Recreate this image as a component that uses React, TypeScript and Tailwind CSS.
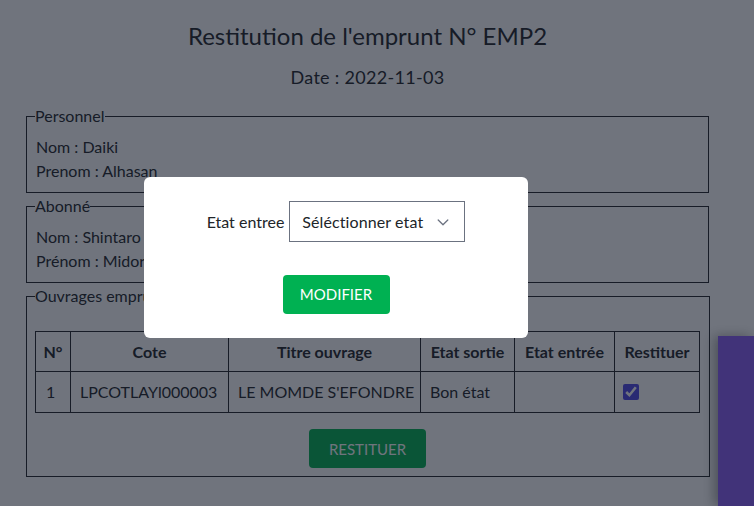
import React from "react";

const rows = [
  { n: "1", cote: "LPCOTLAYl000003", titre: "LE MOMDE S'EFONDRE", sortie: "Bon état", entree: "" },
];

export default function App() {
  return (
    <div
      className="relative w-[754px] h-[506px] overflow-hidden bg-white text-[#212529]"
      style={{ fontFamily: "Lato, 'Noto Sans', sans-serif" }}
    >
      {/* page */}
      <div className="flex w-[735px] flex-col px-[26px]">
        <h1 className="mt-[20px] text-center text-[24px] leading-[32px]">Restitution de l'emprunt N° EMP2</h1>
        <p className="mt-[11px] text-center text-[18px] leading-[28px] tracking-[0.3px]">Date : 2022-11-03</p>

        <fieldset className="mt-[13px] border border-[#212529] pl-[8px] pr-[8px] pb-[9px] text-[16px] leading-[24px]">
          <legend className="px-0">Personnel</legend>
          <div className="mt-[7px] pl-[1px]">Nom : Daiki</div>
          <div className="pl-[1px]">Prenom : Alhasan</div>
        </fieldset>

        <fieldset className="mt-[1px] border border-[#212529] pl-[8px] pr-[8px] pb-[9px] text-[16px] leading-[24px]">
          <legend className="px-0">Abonné</legend>
          <div className="mt-[7px] pl-[1px]">Nom : Shintaro</div>
          <div className="pl-[1px]">Prénom : Midori</div>
        </fieldset>

        <fieldset className="mt-[1px] border border-[#212529] pl-[8px] pr-[9px] pb-[8px] text-[16px] leading-[24px]">
          <legend className="px-0">Ouvrages empruntés</legend>
          <table className="mt-[23px] w-[665px] table-fixed border-collapse text-[16px]">
            <thead>
              <tr className="h-[40px]">
                <th className="w-[35px] border border-[#212529] font-bold">N°</th>
                <th className="w-[158px] border border-[#212529] font-bold">Cote</th>
                <th className="w-[192px] border border-[#212529] font-bold">Titre ouvrage</th>
                <th className="w-[94px] border border-[#212529] font-bold whitespace-nowrap">Etat sortie</th>
                <th className="w-[100px] border border-[#212529] font-bold whitespace-nowrap">Etat entrée</th>
                <th className="border border-[#212529] font-bold">Restituer</th>
              </tr>
            </thead>
            <tbody>
              {rows.map((r) => (
                <tr key={r.n} className="h-[41px] whitespace-nowrap">
                  <td className="border border-[#212529] px-[10px]">{r.n}</td>
                  <td className="border border-[#212529] px-[9px]">{r.cote}</td>
                  <td className="border border-[#212529] px-[9px]">{r.titre}</td>
                  <td className="border border-[#212529] px-[9px]">{r.sortie}</td>
                  <td className="border border-[#212529] px-[9px]">{r.entree}</td>
                  <td className="border border-[#212529] px-[8px]">
                    <input type="checkbox" defaultChecked className="mt-[6px] h-4 w-4 accent-[#4f46e5]" />
                  </td>
                </tr>
              ))}
            </tbody>
          </table>
          <div className="mt-[16px] flex justify-center">
            <button className="h-[39px] w-[117px] rounded-[4px] bg-[#00b152] text-[15px] text-white">RESTITUER</button>
          </div>
        </fieldset>
      </div>

      {/* floating widget */}
      <div className="absolute left-[718px] top-[336px] h-[170px] w-[36px] bg-[#8b5cf6] shadow-[-4px_0_12px_rgba(0,0,0,0.35)]" />

      {/* overlay */}
      <div className="absolute inset-0 bg-[#111827]/60" />

      {/* modal */}
      <div className="absolute left-[144px] top-[177px] flex h-[161px] w-[384px] flex-col items-center rounded-[6px] bg-white pt-[24px]">
        <div className="flex items-center gap-[5px]">
          <span className="text-[16px] text-[#212529]">Etat entree</span>
          <div className="flex h-[41px] w-[176px] items-center justify-between border border-[#6b7280] pl-[12px] pr-[13px] text-[16px] text-[#212529]">
            <span className="tracking-[0.1px]">Séléctionner etat</span>
            <svg width="16" height="16" viewBox="0 0 20 20" fill="none" stroke="#6b7280" strokeWidth="1.6" strokeLinecap="round" strokeLinejoin="round">
              <path d="M4 7.5l6 6 6-6" />
            </svg>
          </div>
        </div>
        <button className="mt-[33px] h-[39px] w-[107px] rounded-[4px] bg-[#00b152] text-[15px] text-white">MODIFIER</button>
      </div>
    </div>
  );
}
